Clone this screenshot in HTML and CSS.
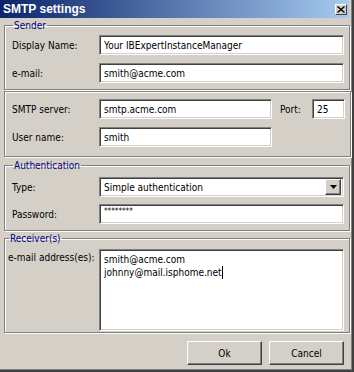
FILE: index.html
```html
<!DOCTYPE html>
<html lang="en">
<head>
    <meta charset="UTF-8">
    <title>SMTP settings</title>
    <link rel="stylesheet" href="styles.css">
</head>
<body>
    <div class="window">
        <div class="titlebar">
            <span class="title">SMTP settings</span>
            <span class="close-btn">
                <svg width="8" height="7" viewBox="0 0 8 7">
                    <path d="M0.5 0.5 L7.5 6.5 M7.5 0.5 L0.5 6.5" stroke="#000" stroke-width="1.4"/>
                </svg>
            </span>
        </div>

        <div class="client">
            <!-- Sender -->
            <fieldset class="group group-sender">
                <legend>Sender</legend>
                <div class="row">
                    <label>Display Name:</label>
                    <div class="edit edit-long">Your IBExpertInstanceManager</div>
                </div>
                <div class="row">
                    <label>e-mail:</label>
                    <div class="edit edit-long">smith@acme.com</div>
                </div>
            </fieldset>

            <!-- Server -->
            <fieldset class="group group-server">
                <div class="row">
                    <label>SMTP server:</label>
                    <div class="edit edit-mid">smtp.acme.com</div>
                    <label class="port-label">Port:</label>
                    <div class="edit edit-port">25</div>
                </div>
                <div class="row">
                    <label>User name:</label>
                    <div class="edit edit-mid">smith</div>
                </div>
            </fieldset>

            <!-- Authentication -->
            <fieldset class="group group-auth">
                <legend>Authentication</legend>
                <div class="row">
                    <label>Type:</label>
                    <div class="combo">
                        <span class="combo-text">Simple authentication</span>
                        <span class="combo-btn">
                            <svg width="7" height="4" viewBox="0 0 7 4">
                                <path d="M0 0 H7 L3.5 4 Z" fill="#000"/>
                            </svg>
                        </span>
                    </div>
                </div>
                <div class="row">
                    <label>Password:</label>
                    <div class="edit edit-long password">********</div>
                </div>
            </fieldset>

            <!-- Receivers -->
            <fieldset class="group group-receiver">
                <legend>Receiver(s)</legend>
                <div class="row row-top">
                    <label class="label-narrow">e-mail address(es):</label>
                    <div class="memo">
                        <div>smith@acme.com</div>
                        <div>johnny@mail.isphome.net<span class="caret"></span></div>
                    </div>
                </div>
            </fieldset>

            <div class="buttons">
                <button class="btn">Ok</button>
                <button class="btn">Cancel</button>
            </div>
        </div>
    </div>
</body>
</html>
```

FILE: styles.css
```css
body {
    margin: 0;
    padding: 0;
    background: #d4d0c8;
    font-family: "DejaVu Sans Condensed", "Liberation Sans", sans-serif;
    font-size: 10px;
    color: #000;
}

.window {
    width: 354px;
    height: 372px;
    box-sizing: border-box;
    background: #d4d0c8;
    border-right: 2px solid #404040;
    border-bottom: 2px solid #404040;
    box-shadow: inset -1px -1px 0 #808080;
    padding-right: 2px;
    padding-bottom: 2px;
}

.titlebar {
    height: 18px;
    margin-right: 1px;
    background: linear-gradient(to right, #0a246a, #a6caf0);
    display: flex;
    align-items: center;
    justify-content: space-between;
    padding: 0 2px 0 3px;
}

.title {
    color: #fff;
    font-family: "Liberation Sans", sans-serif;
    font-weight: bold;
    font-size: 12px;
}

.close-btn {
    width: 12px;
    height: 11px;
    box-sizing: border-box;
    background: #d4d0c8;
    border-top: 1px solid #fff;
    border-left: 1px solid #fff;
    border-right: 1px solid #404040;
    border-bottom: 1px solid #404040;
    display: flex;
    align-items: center;
    justify-content: center;
}

.client {
    padding: 1px 1px 0 4px;
}

/* group boxes */
.group {
    margin: 0;
    border: 1px solid #808080;
    box-shadow: inset 1px 1px 0 #fff, 1px 1px 0 #fff;
    padding: 0 5px 0 7px;
}

.group legend {
    color: #000080;
    padding: 0 1px;
    margin-left: 1px;
    line-height: 13px;
}

.group-sender {
    padding-top: 3px;
    padding-bottom: 6px;
}

.group-server {
    margin-top: 1px;
    padding-top: 7px;
    padding-bottom: 9px;
}

.group-auth {
    margin-top: 2px;
    padding-top: 5px;
    padding-bottom: 6px;
}

.group-auth .row + .row {
    margin-top: 7px;
}

.group-receiver {
    margin-top: 1px;
    padding-top: 4px;
    padding-bottom: 1px;
    padding-left: 3px;
}

.row {
    display: flex;
    align-items: center;
}

.row + .row {
    margin-top: 8px;
}

.row-top {
    align-items: flex-start;
}

.row label {
    width: 87px;
    flex-shrink: 0;
}

.row .label-narrow {
    width: 91px;
    margin-top: 3px;
    white-space: nowrap;
}

/* sunken edit boxes */
.edit, .combo, .memo {
    height: 20px;
    box-sizing: border-box;
    background: #fff;
    border: 1px solid;
    border-color: #808080 #fff #fff #808080;
    box-shadow: inset 1px 1px 0 #404040, inset -1px -1px 0 #d4d0c8;
    padding: 2px 4px;
    line-height: 15px;
    white-space: nowrap;
}

.edit-long {
    width: 245px;
}

.edit-mid {
    width: 173px;
}

.port-label {
    width: 32px !important;
    margin-left: 8px;
}

.edit-port {
    width: 33px;
}

.password {
    font-size: 8px;
    line-height: 10px;
}

.combo {
    width: 245px;
    display: flex;
    align-items: center;
    justify-content: space-between;
    padding: 0 2px 0 4px;
}

.combo-btn {
    width: 16px;
    height: 16px;
    box-sizing: border-box;
    background: #d4d0c8;
    border-top: 1px solid #fff;
    border-left: 1px solid #fff;
    border-right: 1px solid #404040;
    border-bottom: 1px solid #404040;
    box-shadow: inset -1px -1px 0 #808080;
    display: flex;
    align-items: center;
    justify-content: center;
}

.memo {
    width: 245px;
    height: 82px;
    line-height: 13px;
    padding: 3px 4px;
}

.caret {
    display: inline-block;
    width: 1px;
    height: 13px;
    background: #000;
    vertical-align: top;
}

/* buttons */
.buttons {
    display: flex;
    justify-content: flex-end;
    gap: 7px;
    margin-top: 8px;
    padding-right: 5px;
}

.btn {
    width: 75px;
    height: 24px;
    background: #d4d0c8;
    font-family: inherit;
    font-size: 10px;
    border-top: 1px solid #fff;
    border-left: 1px solid #fff;
    border-right: 1px solid #404040;
    border-bottom: 1px solid #404040;
    box-shadow: inset -1px -1px 0 #808080;
    padding: 0;
}
```
